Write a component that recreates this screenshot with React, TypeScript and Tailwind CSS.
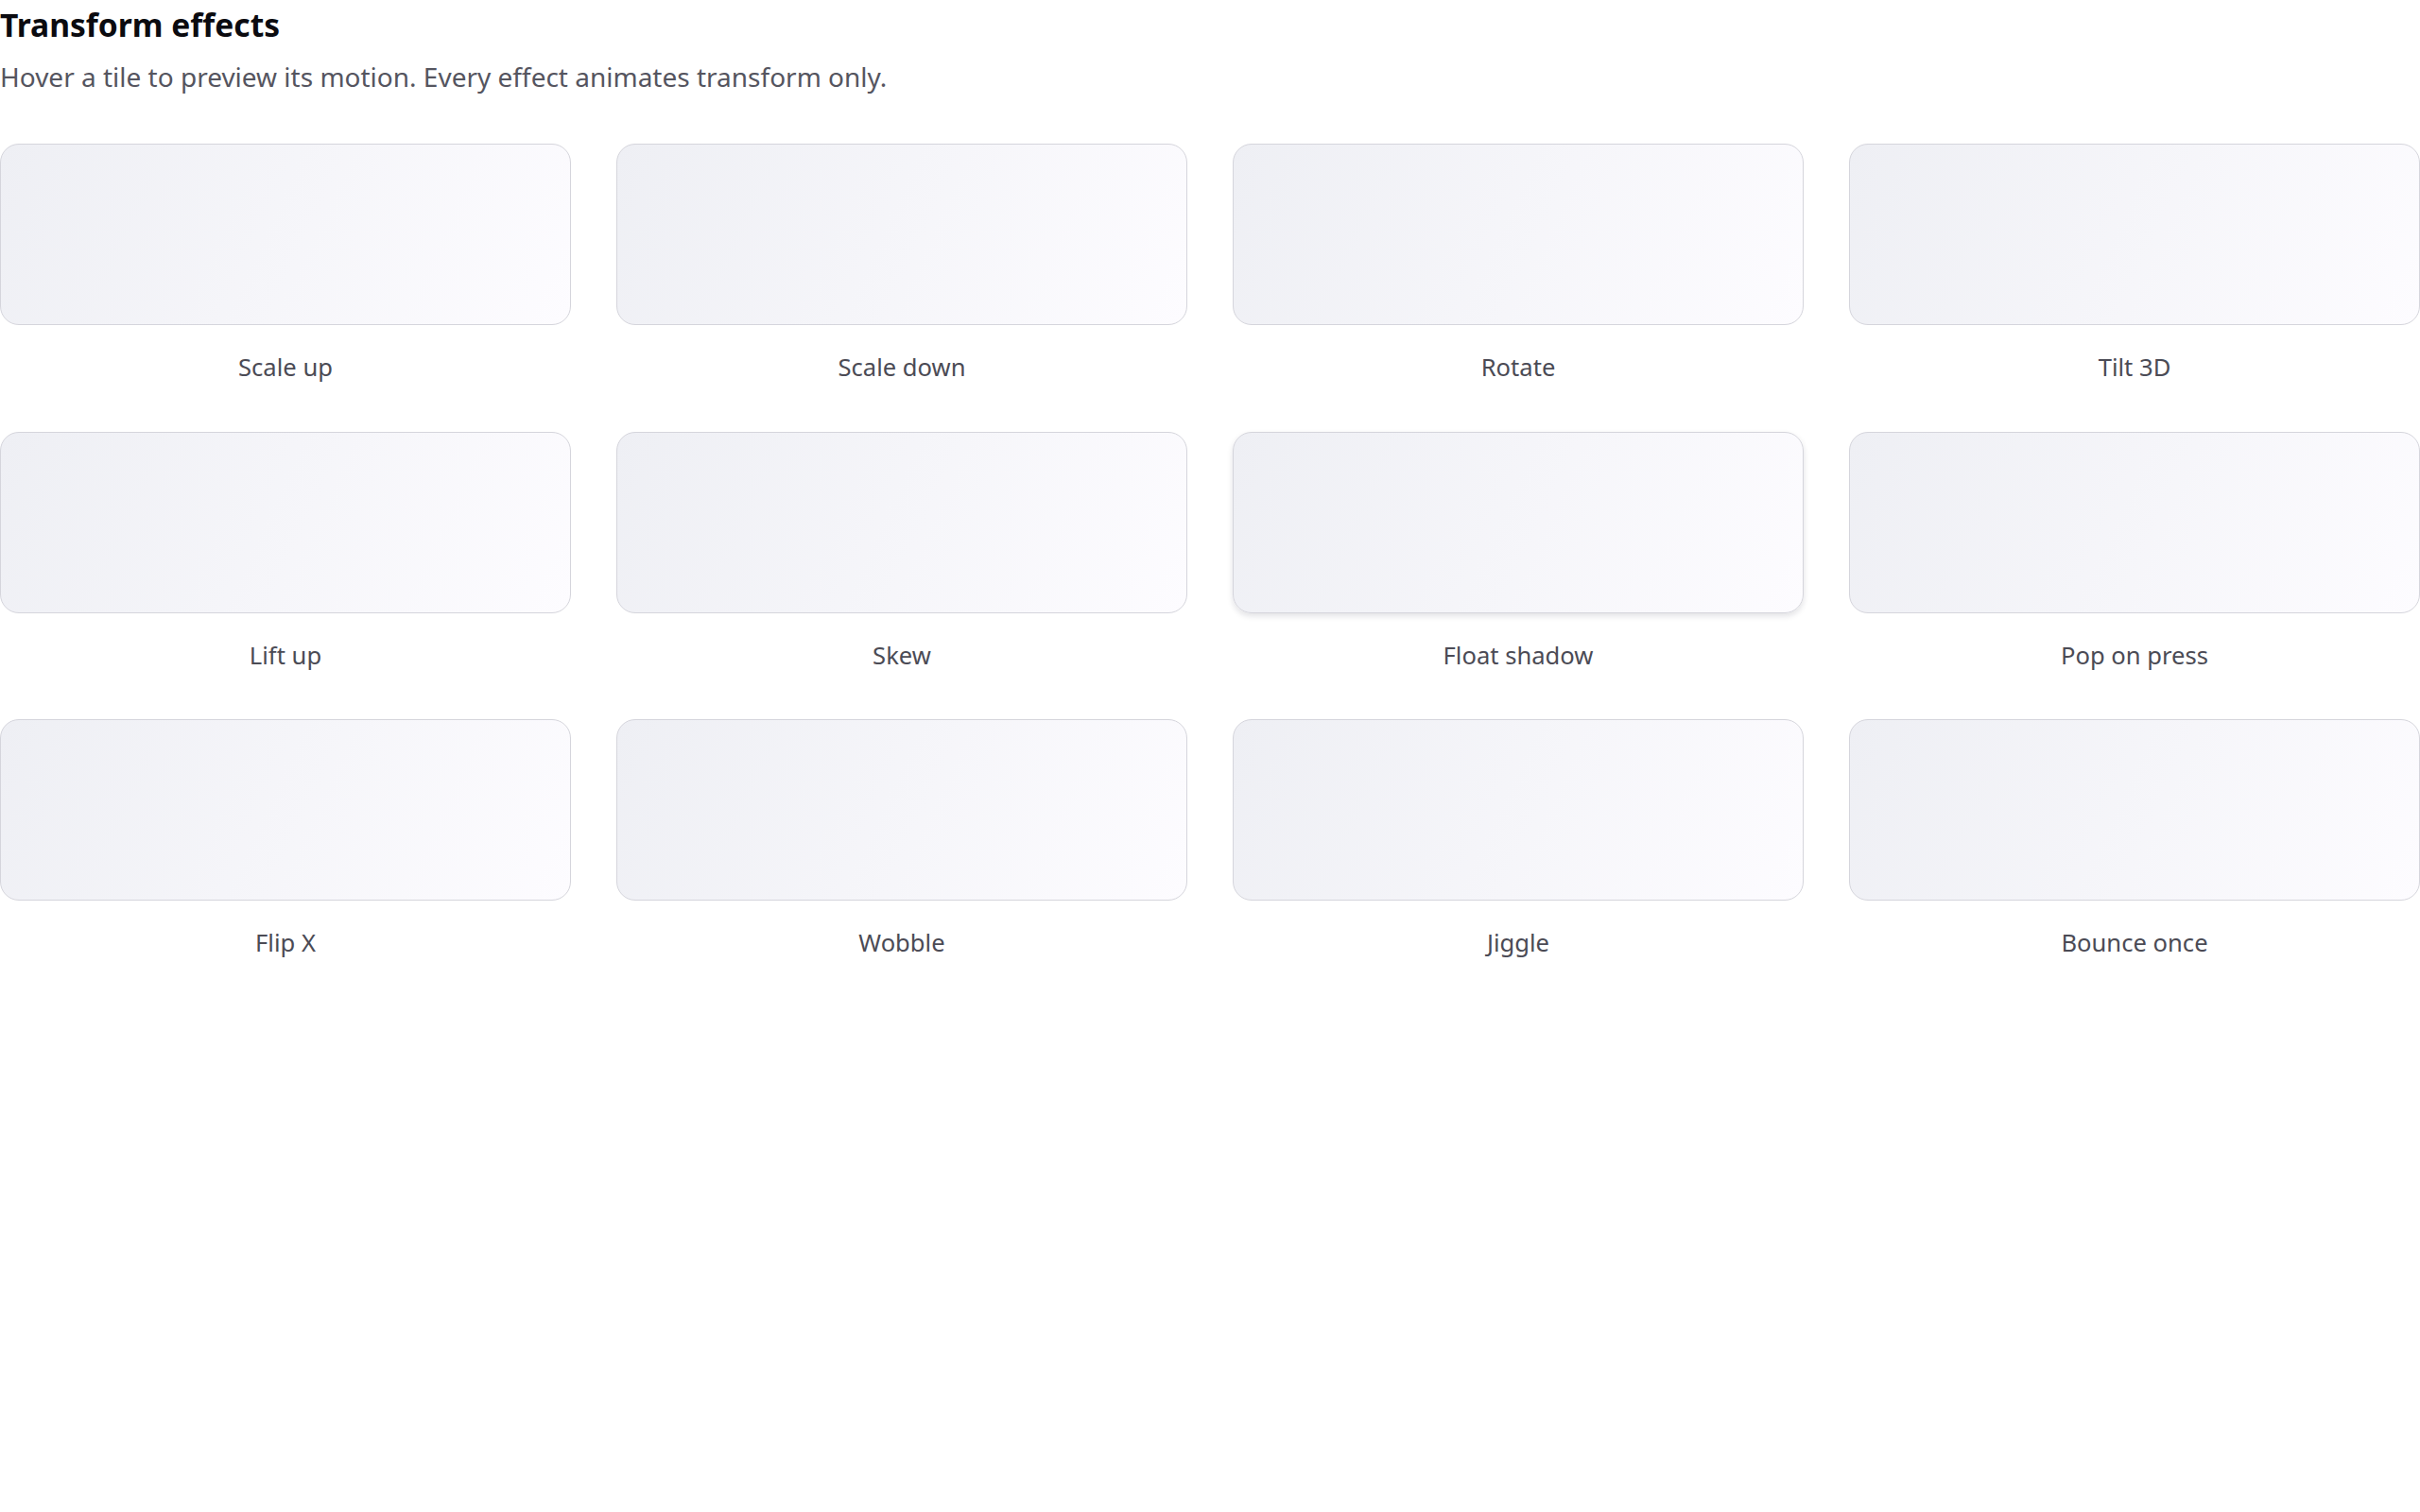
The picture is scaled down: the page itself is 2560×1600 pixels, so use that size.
import React from "react";

type Effect = { name: string; tile?: string };

const effects: Effect[] = [
  { name: "Scale up" },
  { name: "Scale down" },
  { name: "Rotate" },
  { name: "Tilt 3D" },
  { name: "Lift up" },
  { name: "Skew" },
  { name: "Float shadow", tile: "shadow-[0_3px_6px_rgba(20,20,40,0.12)]" },
  { name: "Pop on press" },
  { name: "Flip X" },
  { name: "Wobble" },
  { name: "Jiggle" },
  { name: "Bounce once" },
];

function Tile({ effect }: { effect: Effect }) {
  return (
    <div className="flex flex-col items-center gap-[26px]">
      <div
        className={
          "h-[192px] w-full rounded-[20px] border-[1.6px] border-[#d5d5dc] bg-linear-[115deg] from-[#eeeff4] to-[#fdfcff] " +
          (effect.tile ?? "")
        }
      />
      <span className="text-[25.6px] leading-[38.4px] text-[#4b4b55]">{effect.name}</span>
    </div>
  );
}

export default function App() {
  return (
    <div className="min-h-screen bg-white font-['Noto_Sans',sans-serif]">
      <h1 className="text-[33.6px] font-bold leading-[52px] text-[#0b0b10]">Transform effects</h1>
      <p className="mt-[8px] text-[28px] leading-[43.2px] text-[#55555f]">
        Hover a tile to preview its motion. Every effect animates transform only.
      </p>
      <div className="mt-[49px] grid grid-cols-4 gap-x-[48px] gap-y-[48px]">
        {effects.map((e) => (
          <Tile key={e.name} effect={e} />
        ))}
      </div>
    </div>
  );
}
